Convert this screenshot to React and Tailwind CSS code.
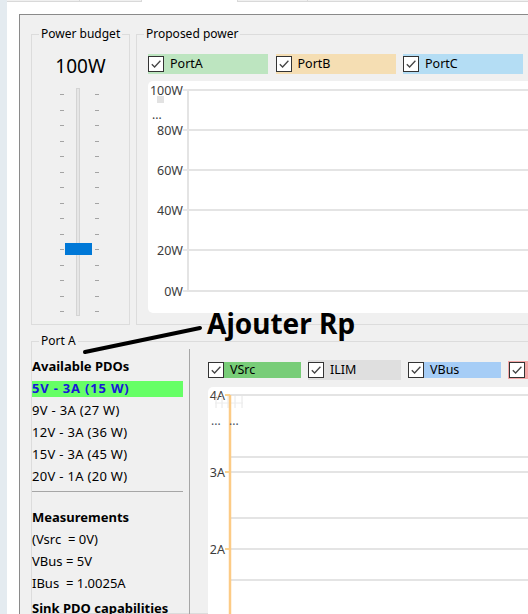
import React from 'react';

const PDOS = ['9V - 3A (27 W)', '12V - 3A (36 W)', '15V - 3A (45 W)', '20V - 1A (20 W)'];
const MEASURES = ['(Vsrc  = 0V)', 'VBus = 5V', 'IBus  = 1.0025A'];
const TICKS = Array.from({ length: 15 });
const POWER_LINES = [
  { y: 9, label: '100W' },
  { y: 49, label: '80W' },
  { y: 89, label: '60W' },
  { y: 129, label: '40W' },
  { y: 169, label: '20W' },
  { y: 210, label: '0W' },
];

function CheckBox() {
  return (
    <span className="w-[16px] h-[16px] shrink-0 border border-[#333] bg-white flex items-center justify-center">
      <svg width="12" height="12" viewBox="0 0 12 12">
        <path d="M1.8 6.2 L4.6 9 L10.4 2.8" fill="none" stroke="#444" strokeWidth="1.3" />
      </svg>
    </span>
  );
}

function Series({ label, className }) {
  return (
    <div className={className}>
      <CheckBox />
      <span className="ml-[6px] text-[12.5px] leading-none text-black whitespace-pre">{label}</span>
    </div>
  );
}

function Legend({ children }) {
  return <legend className="ml-[7px] px-[2px] text-[12px] leading-[16px] text-black">{children}</legend>;
}

function PowerBudget() {
  return (
    <fieldset className="w-[99px] h-[299px] shrink-0 border border-[#dcdcdc]">
      <Legend>Power budget</Legend>
      <div className="mt-[12px] text-center text-[19px] leading-[24px] text-black">100W</div>
      {/* slider */}
      <div className="relative mt-[10px] h-[228px] flex">
        <div className="ml-[28px] w-[4px] pt-[6px] pb-[4px] flex flex-col justify-between">
          {TICKS.map((_, i) => (
            <div key={i} className="h-[1px] bg-[#a4a4a4]" />
          ))}
        </div>
        <div className="ml-[12px] w-[4px] h-full border border-[#d4d4d4] bg-[#e6e6e6]" />
        <div className="ml-[15px] w-[4px] pt-[6px] pb-[4px] flex flex-col justify-between">
          {TICKS.map((_, i) => (
            <div key={i} className="h-[1px] bg-[#a4a4a4]" />
          ))}
        </div>
        <div className="absolute left-[33px] top-[155px] w-[27px] h-[12px] bg-[#0078d7]" />
      </div>
    </fieldset>
  );
}

function PowerChart() {
  return (
    <svg width="390" height="232" className="block">
      {POWER_LINES.map((l) => (
        <g key={l.label}>
          <line x1="40" x2="390" y1={l.y} y2={l.y} stroke="#e4e4e4" strokeWidth="2" />
          <line x1="35" x2="40" y1={l.y} y2={l.y} stroke="#cfcfcf" strokeWidth="1" />
          <text x="35" y={l.y + 4.5} textAnchor="end" fontSize="12.5" fill="#3c3c3c">{l.label}</text>
        </g>
      ))}
      <line x1="40" x2="40" y1="9" y2="211" stroke="#e4e4e4" strokeWidth="2" />
      <rect x="9" y="15" width="7" height="7" fill="#e2e2e2" />
      <text x="4" y="38" fontSize="12" fill="#3c3c3c">...</text>
    </svg>
  );
}

function ProposedPower() {
  return (
    <fieldset className="w-[420px] h-[299px] shrink-0 border border-[#dcdcdc]">
      <Legend>Proposed power</Legend>
      <div className="mt-[12px] pl-[11px] flex gap-[7.5px]">
        <Series label="PortA" className="w-[120px] h-[20px] flex items-center bg-[#bde5c0]" />
        <Series label="PortB" className="w-[120px] h-[20px] flex items-center bg-[#f5deb3]" />
        <Series label="PortC" className="w-[120px] h-[20px] flex items-center bg-[#b4ddf4]" />
      </div>
      <div className="mt-[7px] ml-[11px] h-[232px] bg-white rounded-l-[5px] overflow-hidden">
        <PowerChart />
      </div>
    </fieldset>
  );
}

function CurrentChart() {
  const major = [
    { y: 8, label: '4A' },
    { y: 85, label: '3A' },
    { y: 162, label: '2A' },
  ];
  const minor = [70, 131, 193];
  return (
    <svg width="330" height="240" className="block">
      {minor.map((y) => (
        <line key={y} x1="22" x2="330" y1={y} y2={y} stroke="#e4e4e4" strokeWidth="2" />
      ))}
      {major.map((l) => (
        <g key={l.label}>
          <line x1="22" x2="330" y1={l.y} y2={l.y} stroke="#e4e4e4" strokeWidth="2" />
          <line x1="17" x2="22" y1={l.y} y2={l.y} stroke="#f5a623" strokeWidth="1" />
          <text x="17" y={l.y + 4.5} textAnchor="end" fontSize="12.5" fill="#3c3c3c">{l.label}</text>
        </g>
      ))}
      {/* faint legend grid */}
      {[8, 14, 20, 27, 34].map((x) => (
        <line key={x} x1={x} x2={x} y1="9" y2="21" stroke="#e6e6e6" strokeWidth="1" />
      ))}
      <line x1="7" x2="35" y1="16" y2="16" stroke="#ececec" strokeWidth="1" />
      <line x1="22" x2="22" y1="8" y2="240" stroke="#fccb86" strokeWidth="2.5" />
      <text x="3" y="38" fontSize="12" fill="#4a5060">...</text>
      <text x="21" y="38" fontSize="12" fill="#4a5060">...</text>
    </svg>
  );
}

function PortA() {
  return (
    <fieldset className="mt-[8px] w-[560px] flex-1 min-h-0 border border-[#dcdcdc]">
      <Legend>Port A</Legend>
      <div className="flex h-[280px]">
        {/* left info column */}
        <div className="w-[157px] shrink-0 pt-[7px] pr-[6px] text-[13px] text-black">
          <div className="h-[22px] flex items-center font-bold">Available PDOs</div>
          <div className="h-[22px] flex items-center">
            <div className="w-full h-[16px] flex items-center bg-[#66ff66] font-bold tracking-[0.8px] text-[#1818d8]">5V - 3A (15 W)</div>
          </div>
          {PDOS.map((p) => (
            <div key={p} className="h-[22px] flex items-center tracking-[0.3px]">{p}</div>
          ))}
          <div className="mt-[3px] h-[1px] bg-[#a6a6a6]" />
          <div className="mt-[15px] h-[22px] flex items-center font-bold">Measurements</div>
          {MEASURES.map((m) => (
            <div key={m} className="h-[22px] flex items-center whitespace-pre">{m}</div>
          ))}
          <div className="mt-[3px] h-[22px] flex items-center font-bold whitespace-nowrap">Sink PDO capabilities</div>
        </div>
        {/* right chart pane */}
        <div className="flex-1 border-l border-[#a6a6a6] pl-[18px] flex flex-col">
          <div className="mt-[11px] h-[20px] flex items-center gap-[7px]">
            <Series label="VSrc" className="w-[93px] h-[16px] flex items-center bg-[#78cd78]" />
            <Series label="ILIM" className="w-[93px] h-[20px] flex items-center bg-[#dfdfdf]" />
            <Series label="VBus" className="w-[93px] h-[16px] flex items-center bg-[#a6cdf6]" />
            <Series label="IBus" className="w-[93px] h-[18px] flex items-center bg-[#f4a6a6] pl-[1px]" />
          </div>
          <div className="mt-[7px] flex-1 bg-white rounded-tl-[5px] overflow-hidden">
            <CurrentChart />
          </div>
        </div>
      </div>
    </fieldset>
  );
}

export default function App() {
  return (
    <div className="w-[528px] h-[614px] overflow-hidden flex bg-[#e4ebf0] font-['Noto_Sans',sans-serif]">
      <div className="w-[7px] shrink-0" />
      <div className="flex-1 min-w-0 flex flex-col bg-white">
        {/* tab strip */}
        <div className="h-[2px] flex shrink-0">
          <div className="w-[73px] bg-[#f0f0f0] border-b border-r border-[#d9d9d9]" />
          <div className="w-[62px] bg-[#f0f0f0] border-b border-r border-[#d9d9d9]" />
          <div className="w-[95px] bg-white" />
          <div className="w-[71px] bg-[#f0f0f0] border-b border-l border-r border-[#d9d9d9]" />
          <div className="flex-1 bg-[#f0f0f0] border-b border-[#d9d9d9]" />
        </div>
        <div className="flex-1 min-h-0 pt-[12px] pl-[12px]">
          <div className="relative h-full border-l border-t border-[#8a8a8a] bg-[#f0f0f0] pl-[11px] flex flex-col overflow-hidden">
            <div className="mt-[11px] flex gap-[6px] shrink-0">
              <PowerBudget />
              <ProposedPower />
            </div>
            <PortA />

            {/* annotation overlay */}
            <svg className="absolute left-0 top-0 pointer-events-none" width="260" height="360">
              <line x1="65" y1="337" x2="180" y2="313" stroke="#000" strokeWidth="4" strokeLinecap="round" />
            </svg>
            <div className="absolute left-[187px] top-[294px] text-[28px] leading-[28px] font-bold text-black whitespace-nowrap">
              Ajouter Rp
            </div>
          </div>
        </div>
      </div>
    </div>
  );
}
